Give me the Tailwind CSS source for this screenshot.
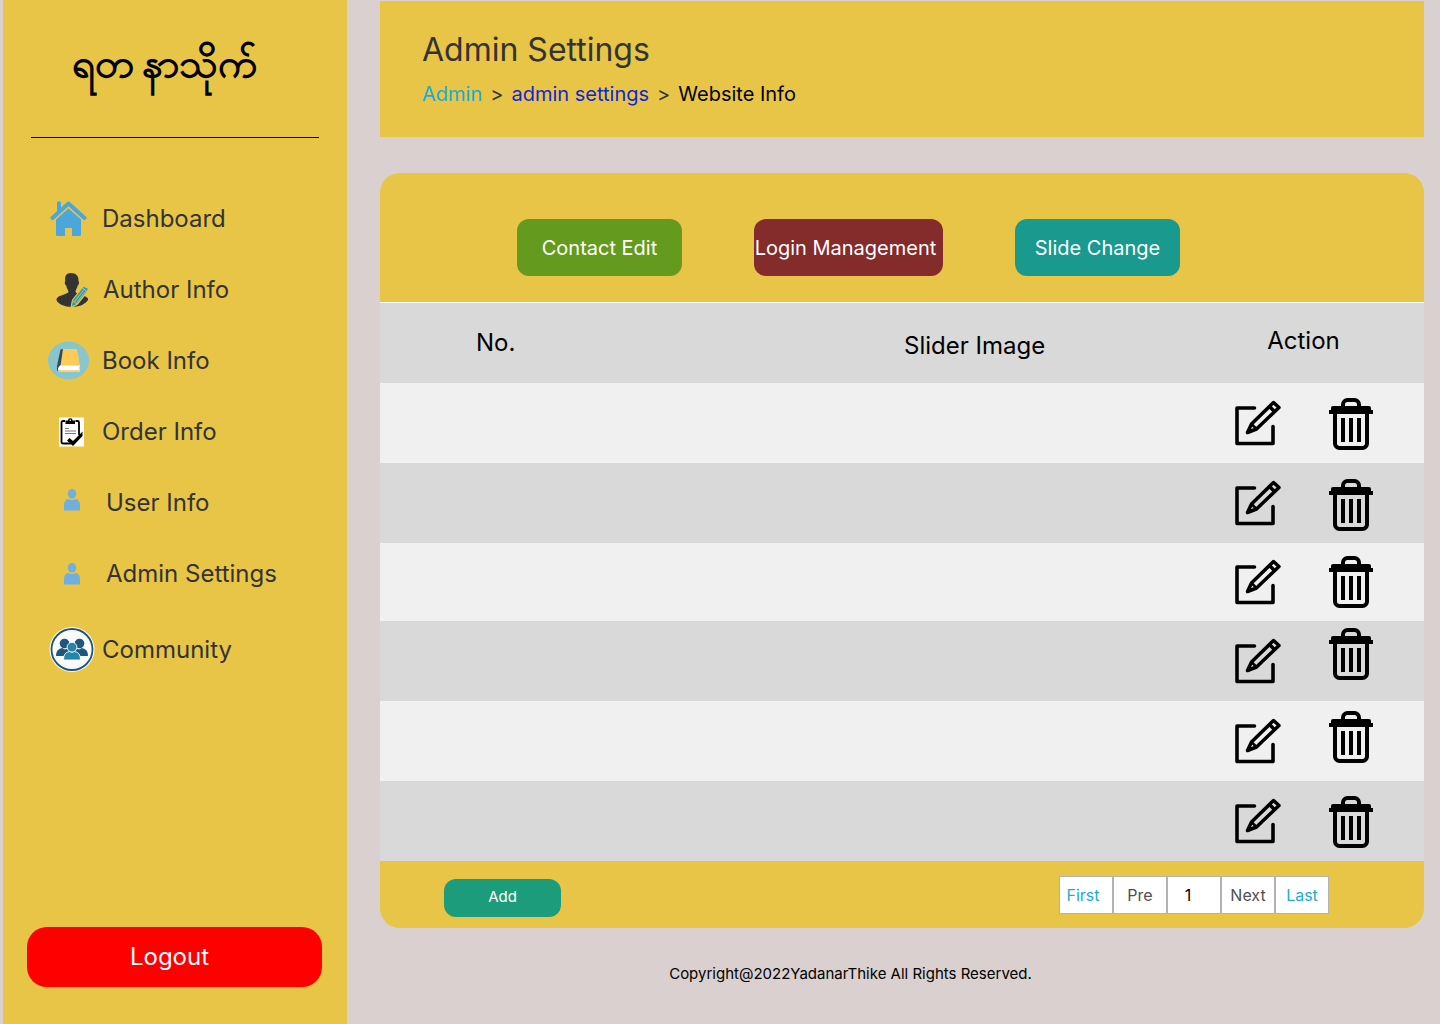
<!DOCTYPE html>
<html lang="en">
<head>
<meta charset="utf-8">
<meta name="viewport" content="width=device-width, initial-scale=1">
<title>Admin Settings</title>
<script src="https://cdn.jsdelivr.net/npm/@tailwindcss/browser@4"></script>
</head>
<body class="min-h-screen bg-[#dad0cf] font-[Inter,sans-serif] text-black">
<!-- icon definitions -->
<svg class="hidden" aria-hidden="true">
  <symbol id="edit" viewBox="0 0 46 46">
    <g fill="none" stroke="#000" stroke-linejoin="round" stroke-linecap="round">
      <path d="M19.500 8H2V43.500H38V26.500" stroke-width="3.600"/>
      <path d="M12.500 32.500L16.500 24L38.500 2.500L44 7.500L21.500 29Z M34.500 6.500L39.500 11.500" stroke-width="3.500"/>
      <path d="M17 24.500L21 28.500" stroke-width="2.500"/>
    </g>
    <path d="M12 33L14.500 27.500L18.500 31Z"/>
  </symbol>
  <symbol id="trash" viewBox="0 0 44 52">
    <path d="M14 9V6.500a4.500 4.500 0 0 1 4.500-4.500h7a4.500 4.500 0 0 1 4.500 4.500V9" fill="none" stroke="#000" stroke-width="4"/>
    <path d="M4 8h36a2 2 0 0 1 2 2v2h2v4H0v-4h2v-2a2 2 0 0 1 2-2Z"/>
    <path d="M6 15V45.500a4.500 4.500 0 0 0 4.500 4.500h23a4.500 4.500 0 0 0 4.500-4.500V15" fill="none" stroke="#000" stroke-width="4"/>
    <path d="M12 20h4v24h-4ZM20 20h4v24h-4ZM28 20h4v24h-4Z"/>
  </symbol>
  <symbol id="person" viewBox="0 0 16 22">
    <ellipse cx="8" cy="4.800" rx="4.200" ry="4.800" fill="#6fb0e0"/>
    <path d="M0 21.500V16.500Q0 10.500 4.500 10 8 12 11.500 10 16 10.500 16 16.500v5Z" fill="#6fb0e0"/>
  </symbol>
</svg>

<div class="flex min-h-screen pl-[3px]">
  <aside class="flex w-[344px] shrink-0 flex-col bg-[#e8c547] pb-[37px]">
    <div class="mx-7 flex h-[138px] items-center justify-center border-b border-black pb-3 pr-5">
      <span lang="my" class="whitespace-nowrap text-[40px] font-semibold leading-[48px]">ရတ&#8201;နာသိုက်</span>
    </div>
    <nav class="mt-[45px] flex flex-col text-2xl text-[#333]">
      <a href="#" class="flex h-[71px] items-center pl-11">
        <svg class="mr-3 h-9 w-[43px]" viewBox="0 0 43 36"><path d="M5.500 17L21.500 2.500L37.500 17" fill="none" stroke="#4ba6dc" stroke-width="4" stroke-linecap="round" stroke-linejoin="round"/><path d="M10 1.500a1 1 0 0 1 1-1h2a1 1 0 0 1 1 1V8L10 11.500ZM21.500 7.500L34 18.500V33.500a1.500 1.500 0 0 1-1.500 1.500H25V27h-7v8h-7.500A1.500 1.500 0 0 1 9 33.500V18.500Z" fill="#4ba6dc"/></svg>
        Dashboard</a>
      <a href="#" class="flex h-[71px] items-center pl-11">
        <svg class="mr-3 h-9 w-11" viewBox="0 0 44 36">
          <path d="M24 1c5 0 8 3 7.500 8 1 1 .5 4-.8 4.500-.7 3-2 4-2.200 6 0 3 10 3 12.500 7 1 2-3 5-7 7-6 2-14 2-19-.5-3-1.500-6-4-5.500-6 2-4.500 12-4.500 12-7.500-.4-2-1.800-3-2.300-6-1.400-.5-1.900-3.500-.9-4.500C17.600 4 19 1 24 1Z" fill="#333"/>
          <path d="M24 35.500L25.500 28L36.500 14L41.500 16.500L40.500 19.500L30 32.500Z" fill="#2f9cba" stroke="#e8c547" stroke-width="1.200" stroke-linejoin="round"/>
          <path d="M27.500 29.500L37.500 17M29.500 30.500L39 19M35 15.500L40 19.500M26 29L30 32" fill="none" stroke="#e8c547" stroke-width=".8"/>
        </svg>
        Author Info</a>
      <a href="#" class="flex h-[71px] items-center pl-11">
        <svg class="mr-3 h-10 w-[43px]" viewBox="0 0 43 40">
          <ellipse cx="21.500" cy="19.500" rx="20.500" ry="19" fill="#88c5cd"/>
          <path d="M13.500 8.500L16 8V26L13.500 30H10.500Q9.500 28 10 25Z" fill="#34495e"/>
          <path d="M16 8H29Q30 8 30.300 9.500L33 25H13.500Z" fill="#fdcb56"/>
          <path d="M13 24.500H33Q31.500 27 33 30.500H12Q9.500 27.500 13 24.500Z" fill="#fff"/>
          <path d="M12 29.800H33" stroke="#f5c34a"/>
        </svg>
        Book Info</a>
      <a href="#" class="flex h-[71px] items-center pl-11">
        <svg class="mr-3 h-[30px] w-[43px]" viewBox="0 0 43 30">
          <path d="M12 .5h25v29H12Z" fill="#fff"/>
          <path d="M18 4H16a1.500 1.500 0 0 0-1.500 1.500V25a1.500 1.500 0 0 0 1.500 1.500h8M28.500 4h2A1.500 1.500 0 0 1 32 5.500V18" fill="none" stroke="#000" stroke-width="1.800"/>
          <path d="M18.500 7V3.500h2.500a2.300 2.300 0 0 1 4.600 0H28V7Z"/>
          <circle cx="23.300" cy="3.200" r=".8" fill="#fff"/>
          <path d="M18 11.500h4M18 14h11M18 16.500h11" stroke="#777" stroke-width="1"/>
          <path d="M20 23.500L22.500 21L26 24L35.500 14.500V19L26 29Z"/>
        </svg>
        Order Info</a>
      <a href="#" class="flex h-[71px] items-center pl-[61px]">
        <svg class="mb-1.5 mr-[26px] h-[22px] w-4"><use href="#person"/></svg>
        User Info</a>
      <a href="#" class="flex h-[71px] items-center pl-[61px]">
        <svg class="mr-[26px] h-[22px] w-4"><use href="#person"/></svg>
        Admin Settings</a>
      <a href="#" class="flex h-[82px] items-center pl-11">
        <svg class="mr-1.5 h-12 w-[49px]" viewBox="0 0 49 48">
          <circle cx="25" cy="23.500" r="22.500" fill="#fafafa"/>
          <circle cx="25" cy="23.500" r="20.500" fill="none" stroke="#1f567b" stroke-width="1.800"/>
          <g fill="#1f567b"><circle cx="17.500" cy="17.500" r="4.800"/><circle cx="32.500" cy="17.500" r="4.800"/><path d="M9 30q0-7 6-8l3 1.500 4-1.500 6 0 4 1.500 3-1.500q6 1 6 8Z"/></g>
          <g fill="#2385a8" stroke="#fafafa" stroke-width=".9"><path d="M16.500 34q0-8 6-8.500 2.500 1.200 5 0 6 .5 6 8.500Z"/><circle cx="25" cy="21.200" r="4.900"/></g>
        </svg>
        Community</a>
    </nav>
    <button type="button" class="ml-6 mr-[25px] mt-auto h-[60px] rounded-[20px] bg-[#ff0000] pr-2.5 text-2xl text-white">Logout</button>
  </aside>

  <main class="ml-[33px] mr-4 flex min-w-0 flex-1 flex-col pt-px">
    <header class="h-[136px] bg-[#e8c547] pl-[42px] pt-[29px]">
      <h1 class="text-[32px] leading-10 text-[#333]">Admin Settings</h1>
      <nav class="mt-2.5 flex gap-2 text-xl leading-7 text-[#333]" aria-label="Breadcrumb">
        <a href="#" class="text-[#1cabd3]">Admin</a><span>&gt;</span><a href="#" class="text-[#1225d6]">admin settings</a><span>&gt;</span><span class="text-black">Website Info</span>
      </nav>
    </header>

    <section class="mt-9 overflow-hidden rounded-[20px] bg-[#e8c547]">
      <div class="flex flex-wrap gap-x-[72px] gap-y-4 border-b border-white pb-[26px] pl-[137px] pt-[46px] text-xl text-white">
        <button type="button" class="h-[57px] w-[165px] rounded-xl bg-[#649b1e]">Contact Edit</button>
        <button type="button" class="h-[57px] w-[189px] rounded-xl bg-[#842b2b] pr-1.5">Login Management</button>
        <button type="button" class="h-[57px] w-[165px] rounded-xl bg-[#1a998e]">Slide Change</button>
      </div>
      <table class="w-full table-fixed">
        <thead>
          <tr class="h-20 bg-[#d9d9d9] text-2xl">
            <th scope="col" class="w-[37%] pl-24 text-left font-normal">No.</th>
            <th scope="col" class="pt-1.5 text-center font-normal">Slider Image</th>
            <th scope="col" class="w-[241px] pb-1 text-center font-normal">Action</th>
          </tr>
        </thead>
        <tbody id="rows"></tbody>
      </table>
      <div class="flex h-[67px] items-center justify-between pl-16 pr-[95px]">
        <button type="button" class="mt-1.5 h-[38px] w-[117px] rounded-xl bg-[#1d9c7c] text-[15px] text-white">Add</button>
        <nav class="flex text-base text-[#4f4f4f]" aria-label="Pagination">
          <a href="#" class="flex h-[38px] w-[54px] items-center justify-center border border-[#b3b3b3] bg-white pr-1.5 text-[#1cabd3]">First</a>
          <a href="#" class="flex h-[38px] w-[54px] items-center justify-center border border-[#b3b3b3] bg-white">Pre</a>
          <a href="#" class="flex h-[38px] w-[54px] items-center justify-center border border-[#b3b3b3] bg-white pr-3 text-black">1</a>
          <a href="#" class="flex h-[38px] w-[54px] items-center justify-center border border-[#b3b3b3] bg-white">Next</a>
          <a href="#" class="flex h-[38px] w-[54px] items-center justify-center border border-[#b3b3b3] bg-white text-[#1cabd3]">Last</a>
        </nav>
      </div>
    </section>
    <footer class="py-9 pr-[103px] text-center text-[15px] leading-5">Copyright@2022YadanarThike All Rights Reserved.</footer>
  </main>
</div>
<script>
  const rows = [['h-20','pt-0.5'],['h-20','pt-1'],['h-[78px]',''],['h-20','pb-3.5'],['h-20','pb-2'],['h-20','pt-0.5']];
  document.getElementById('rows').innerHTML = rows.map(([h, pad]) => `
    <tr class="${h} odd:bg-[#f0f0f0] even:bg-[#d9d9d9]"><td></td><td></td><td>
      <div class="flex items-center justify-center gap-12">
        <button type="button" aria-label="Edit"><svg class="size-[46px]"><use href="#edit"/></svg></button>
        <button type="button" aria-label="Delete" class="${pad}"><svg class="h-[52px] w-11"><use href="#trash"/></svg></button>
      </div></td></tr>`).join('');
</script>
</body>
</html>
